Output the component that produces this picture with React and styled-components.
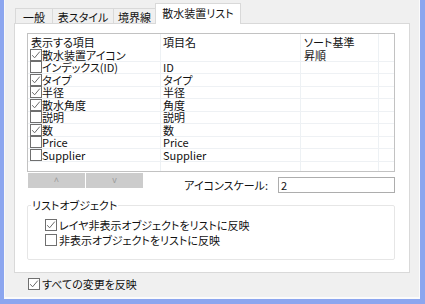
import React from "react";
import styled, { createGlobalStyle } from "styled-components";

const GlobalStyle = createGlobalStyle`
  html, body {
    margin: 0;
    padding: 0;
  }
  body {
    width: 425px;
    height: 304px;
    overflow: hidden;
    font-family: "Noto Sans CJK JP", "Liberation Sans", sans-serif;
    font-size: 11px;
    line-height: 14px;
    font-feature-settings: "palt";
    color: #111;
  }
`;

const Window = styled.div`
  box-sizing: border-box;
  width: 425px;
  height: 304px;
  background: #8ca6ef;
  padding: 0 5px 5px 4px;
  display: flex;
`;

const Client = styled.div`
  flex: 1;
  display: flex;
  flex-direction: column;
  background: #f0f0f0;
  border-left: 1px solid #f8f8f8;
  border-right: 1px solid #fbfbfb;
  border-bottom: 2px solid #fbfbfb;
  padding: 0 9px;
`;

const TabStrip = styled.div`
  height: 23px;
  display: flex;
  align-items: flex-end;
  padding-left: 1px;
`;

const Tab = styled.div`
  box-sizing: border-box;
  position: relative;
  z-index: ${(p) => (p.active ? 1 : 0)};
  width: ${(p) => p.w}px;
  height: ${(p) => (p.active ? 21 : 15)}px;
  margin-left: ${(p) => (p.first ? 0 : -1)}px;
  margin-bottom: ${(p) => (p.active ? -1 : 0)}px;
  border: 1px solid #d9d9d9;
  border-bottom: none;
  background: ${(p) => (p.active ? "#fff" : "#f0f0f0")};
  display: flex;
  align-items: center;
  justify-content: center;
  padding-bottom: ${(p) => (p.active ? 3 : 0)}px;
  padding-top: 1px;
`;

const Panel = styled.div`
  box-sizing: border-box;
  height: 250px;
  background: #fff;
  border: 1px solid #d9d9d9;
  padding: 9px 14px 0 12px;
  display: flex;
  flex-direction: column;
`;

const List = styled.div`
  box-sizing: border-box;
  height: 139px;
  border: 1px solid #c2c2c2;
  display: grid;
  grid-template-columns: 133px 140px 78px 1fr;
  grid-template-rows: 15px repeat(9, 12.5px) 1fr;
`;

const Cell = styled.div`
  box-sizing: border-box;
  display: flex;
  align-items: center;
  min-height: 0;
  white-space: nowrap;
  padding-left: ${(p) => p.pad ?? 2}px;
  border-right: ${(p) => (p.last ? "none" : "1px solid #edf1f4")};
  border-bottom: ${(p) => (p.line ? "1px solid #eef1f4" : "none")};
  line-height: 12px;
`;

const CheckLabel = styled.label`
  display: flex;
  align-items: center;
  gap: ${(p) => p.gap ?? 0}px;
  height: ${(p) => p.h ?? 15}px;
  white-space: nowrap;
`;

const ButtonRow = styled.div`
  display: flex;
  align-items: flex-start;
  margin-top: 1px;
`;

const ArrowButton = styled.div`
  width: 57px;
  height: 15px;
  margin-left: 1px;
  background: #cccccc;
  color: #9d9d9d;
  font-family: "Liberation Sans", sans-serif;
  font-size: 9px;
  line-height: 15px;
  text-align: center;
`;

const ScaleField = styled.div`
  margin-left: auto;
  margin-top: 4px;
  display: flex;
  align-items: center;
  gap: 10px;
`;

const ScaleInput = styled.div`
  box-sizing: border-box;
  width: 117px;
  height: 16px;
  border: 1px solid #adadad;
  background: #fff;
  padding-left: 2px;
  line-height: 14px;
`;

const Group = styled.fieldset`
  margin: 5px 0 0 0;
  padding: 0;
  border: 1px solid #e6e6e6;
  border-radius: 2px;
`;

const GroupTitle = styled.legend`
  margin-left: 3px;
  padding: 0 1px;
  line-height: 14px;
`;

const GroupBody = styled.div`
  padding: 5px 0 12px 17px;
  display: flex;
  flex-direction: column;
`;

const Footer = styled.div`
  margin-top: 3px;
  padding-left: 14px;
`;

const Check = ({ checked }) => (
  <svg width="12" height="12" viewBox="0 0 12 12" style={{ flex: "none" }}>
    <rect x="0.5" y="0.5" width="11" height="11" fill="#fff" stroke="#6f6f6f" />
    {checked && (
      <path d="M2.2 6.2 L4.6 8.8 L9.8 2.6" fill="none" stroke="#6a6a6a" strokeWidth="1" />
    )}
  </svg>
);

const rows = [
  { label: "散水装置アイコン", name: "", sort: "昇順", on: true },
  { label: "インデックス(ID)", name: "ID", sort: "", on: false },
  { label: "タイプ", name: "タイプ", sort: "", on: true },
  { label: "半径", name: "半径", sort: "", on: true },
  { label: "散水角度", name: "角度", sort: "", on: true },
  { label: "説明", name: "説明", sort: "", on: false },
  { label: "数", name: "数", sort: "", on: true },
  { label: "Price", name: "Price", sort: "", on: false },
  { label: "Supplier", name: "Supplier", sort: "", on: false },
];

const tabs = [
  { text: "一般", w: 38 },
  { text: "表スタイル", w: 62 },
  { text: "境界線", w: 43 },
  { text: "散水装置リスト", w: 86, active: true },
];

export default function App() {
  return (
    <>
      <GlobalStyle />
      <Window>
        <Client>
          <TabStrip>
            {tabs.map((t, i) => (
              <Tab key={t.text} w={t.w} first={i === 0} active={t.active}>
                {t.text}
              </Tab>
            ))}
          </TabStrip>
          <Panel>
            <List>
              <Cell pad={3}>表示する項目</Cell>
              <Cell>項目名</Cell>
              <Cell pad={3}>ソート基準</Cell>
              <Cell last />
              {rows.map((r) => (
                <React.Fragment key={r.label}>
                  <Cell line>
                    <CheckLabel h={12}>
                      <Check checked={r.on} />
                      {r.label}
                    </CheckLabel>
                  </Cell>
                  <Cell line>{r.name}</Cell>
                  <Cell line pad={3}>
                    {r.sort}
                  </Cell>
                  <Cell line last />
                </React.Fragment>
              ))}
              <Cell />
              <Cell />
              <Cell />
              <Cell last />
            </List>
            <ButtonRow>
              <ArrowButton>˄</ArrowButton>
              <ArrowButton>v</ArrowButton>
              <ScaleField>
                アイコンスケール:
                <ScaleInput>2</ScaleInput>
              </ScaleField>
            </ButtonRow>
            <Group>
              <GroupTitle>リストオブジェクト</GroupTitle>
              <GroupBody>
                <CheckLabel gap={2}>
                  <Check checked />
                  レイヤ非表示オブジェクトをリストに反映
                </CheckLabel>
                <CheckLabel gap={2}>
                  <Check />
                  非表示オブジェクトをリストに反映
                </CheckLabel>
              </GroupBody>
            </Group>
          </Panel>
          <Footer>
            <CheckLabel gap={2}>
              <Check checked />
              すべての変更を反映
            </CheckLabel>
          </Footer>
        </Client>
      </Window>
    </>
  );
}
